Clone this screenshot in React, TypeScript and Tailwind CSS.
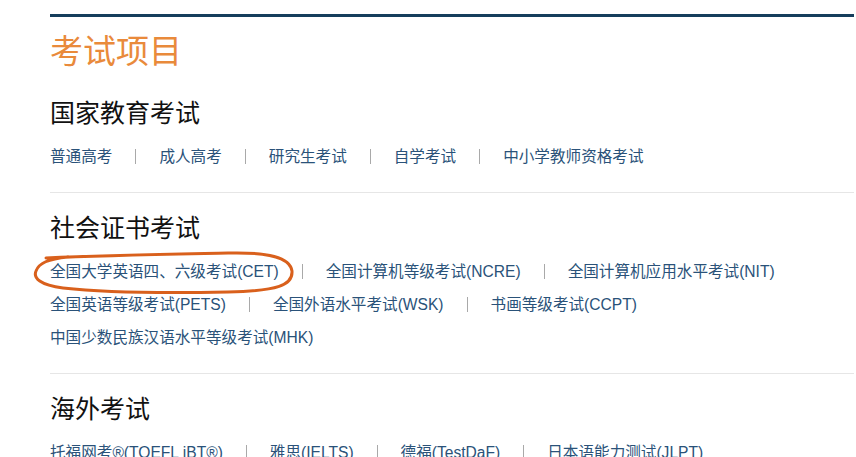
import React from 'react';

type Group = { title: string; rows: string[][] };

const groups: Group[] = [
  {
    title: '国家教育考试',
    rows: [['普通高考', '成人高考', '研究生考试', '自学考试', '中小学教师资格考试']],
  },
  {
    title: '社会证书考试',
    rows: [
      ['全国大学英语四、六级考试(CET)', '全国计算机等级考试(NCRE)', '全国计算机应用水平考试(NIT)'],
      ['全国英语等级考试(PETS)', '全国外语水平考试(WSK)', '书画等级考试(CCPT)'],
      ['中国少数民族汉语水平等级考试(MHK)'],
    ],
  },
  {
    title: '海外考试',
    rows: [['托福网考®(TOEFL iBT®)', '雅思(IELTS)', '德福(TestDaF)', '日本语能力测试(JLPT)']],
  },
];

const font = { fontFamily: '"Liberation Sans", "Noto Sans CJK SC", sans-serif' };

const LinkRow: React.FC<{ items: string[] }> = ({ items }) => (
  <div className="flex items-center h-[33px] text-[15.6px] text-[#2a5279] whitespace-nowrap">
    {items.map((item, i) => (
      <React.Fragment key={item}>
        {i > 0 && <span className="mx-[23px] inline-block w-px h-[15px] bg-[#a9a9a9]" />}
        <a className="cursor-pointer hover:underline">{item}</a>
      </React.Fragment>
    ))}
  </div>
);

export default function App() {
  return (
    <div className="relative bg-white w-[856px] h-[457px] overflow-hidden" style={font}>
      <div className="pl-[50px] pr-[2px] pt-[14px]">
        <div className="border-t-[3px] border-[#163e5c]" />
        <h1 className="mt-[15px] text-[33px] leading-[40px] text-[#e98a3b]">考试项目</h1>

        {groups.map((g, gi) => (
          <div key={g.title} className={gi > 0 ? 'border-t border-[#e6e6e6] mt-[19px]' : ''}>
            <h2 className={`${gi > 0 ? 'mt-[18px]' : 'mt-[24px]'} text-[25px] leading-[34px] text-[#111]`}>
              {g.title}
            </h2>
            <div className="mt-[10px]">
              {g.rows.map((r) => (
                <LinkRow key={r[0]} items={r} />
              ))}
            </div>
          </div>
        ))}
      </div>

      {/* hand-drawn orange circle around CET */}
      <svg className="absolute left-[28px] top-[245px] w-[272px] h-[52px]" viewBox="0 0 272 52" fill="none">
        <path
          d="M18 13 C 80 10, 150 9, 200 8 C 240 7, 262 12, 264 26 C 265 40, 250 46, 200 47 C 150 48, 80 48, 35 43 C 12 40, 5 33, 8 26 C 11 18, 20 14, 40 12"
          stroke="#d9601c"
          strokeWidth="3"
          strokeLinecap="round"
        />
      </svg>
    </div>
  );
}
